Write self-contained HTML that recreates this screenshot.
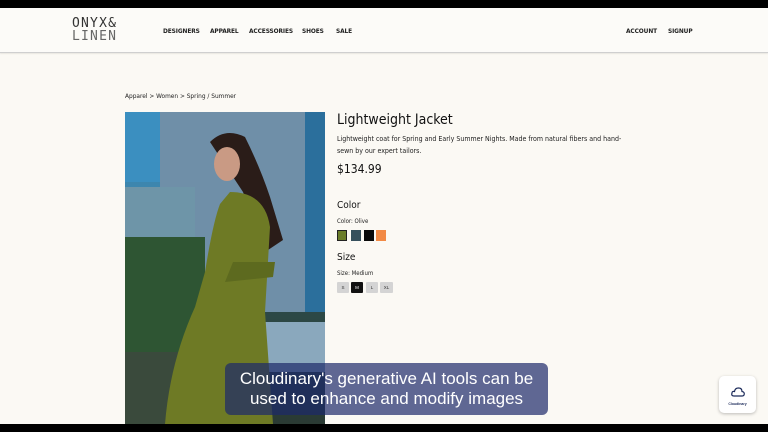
<!DOCTYPE html>
<html><head><meta charset="utf-8"><style>
*{margin:0;padding:0;box-sizing:border-box}
body{width:768px;height:432px;overflow:hidden;background:#fbf9f4;font-family:"Liberation Sans",sans-serif;color:#222;position:relative}
.topbar{position:absolute;left:0;top:0;width:768px;height:8px;background:#000}
.botbar{position:absolute;left:0;top:424px;width:768px;height:8px;background:#000}
.header{position:absolute;left:0;top:8px;width:768px;height:45px;background:#fcfbf8;border-bottom:1px solid #cfcfcf;box-shadow:0 1px 1px rgba(0,0,0,.08)}
.logo{position:absolute;left:72px;top:9px;font-size:13px;line-height:13px;letter-spacing:1.2px;color:#333;font-family:"DejaVu Sans Mono",monospace}
.logo div:last-child{color:#666}
.nav{position:absolute;top:19px;font-size:6.5px;color:#222;font-family:"DejaVu Sans Condensed","DejaVu Sans",sans-serif;font-weight:bold;letter-spacing:-.1px}
.crumb{position:absolute;left:125px;top:92px;font-size:6.5px;color:#222;font-family:"DejaVu Sans Condensed",sans-serif}
.img{position:absolute;left:125px;top:112px;width:200px;height:312px;overflow:hidden}
h1{position:absolute;left:337px;top:112px;font-size:14px;font-weight:normal;color:#111;font-family:"DejaVu Sans Condensed",sans-serif}
.desc{position:absolute;left:337px;top:133px;width:320px;font-size:7px;line-height:12px;color:#222;font-family:"DejaVu Sans Condensed",sans-serif}
.price{position:absolute;left:337px;top:162px;font-size:12px;color:#111;font-family:"DejaVu Sans Condensed",sans-serif}
.h2{position:absolute;left:337px;font-size:10px;color:#111;font-family:"DejaVu Sans Condensed",sans-serif}
.lbl{position:absolute;left:337px;font-size:6px;color:#222;font-family:"DejaVu Sans Condensed",sans-serif}
.sw{position:absolute;top:230px;width:10px;height:11px}
.sz{position:absolute;top:282px;width:12px;height:11px;background:#d4d4d4;font-size:4.5px;text-align:center;line-height:11px;color:#333;border-radius:1px}
.cap{position:absolute;left:225px;top:363px;width:323px;height:52px;background:rgba(28,42,105,.7);border-radius:6px;color:#fff;font-size:17px;line-height:20px;text-align:center;padding-top:6px}
.cld{position:absolute;left:719px;top:376px;width:37px;height:37px;background:#fff;border-radius:5px;box-shadow:0 1px 3px rgba(0,0,0,.25);text-align:center}
</style></head><body>
<div class="topbar"></div>
<div class="header">
 <div class="logo"><div>ONYX&amp;</div><div>LINEN</div></div>
 <div class="nav" style="left:163px">DESIGNERS</div>
 <div class="nav" style="left:210px">APPAREL</div>
 <div class="nav" style="left:249px">ACCESSORIES</div>
 <div class="nav" style="left:302px">SHOES</div>
 <div class="nav" style="left:336px">SALE</div>
 <div class="nav" style="left:626px">ACCOUNT</div>
 <div class="nav" style="left:668px">SIGNUP</div>
</div>
<div class="crumb">Apparel &gt; Women &gt; Spring / Summer</div>
<div class="img"><svg width="200" height="312" viewBox="0 0 200 312">
<defs><linearGradient id="bg" x1="0" y1="0" x2="0" y2="1"><stop offset="0" stop-color="#2f86b5"/><stop offset=".45" stop-color="#4a86a8"/><stop offset=".6" stop-color="#2c4a48"/><stop offset="1" stop-color="#2a3a33"/></linearGradient></defs>
<rect width="200" height="312" fill="url(#bg)"/>
<rect x="35" y="0" width="145" height="200" fill="#6f8fa8"/>
<rect x="180" y="0" width="20" height="200" fill="#2b6f9c"/>
<rect x="0" y="0" width="35" height="70" fill="#3b8fc0"/>
<rect x="0" y="75" width="70" height="50" fill="#6e95a8"/>
<rect x="0" y="125" width="80" height="120" fill="#2e5533"/>
<rect x="105" y="210" width="95" height="50" fill="#8aa8bd"/>
<rect x="0" y="240" width="90" height="72" fill="#3a4a3c"/>
<path d="M85 30 Q100 15 120 25 Q135 55 145 85 L158 128 L140 140 L118 80 Z" fill="#2a1c18"/>
<ellipse cx="102" cy="52" rx="13" ry="17" fill="#c99a84"/>
<path d="M105 80 Q140 80 145 115 L140 200 L148 312 L40 312 Q45 250 70 195 L80 160 Q88 110 95 92 Z" fill="#6e7a25"/>
<path d="M108 150 L150 150 L148 165 L100 170 Z" fill="#5d6a1f"/>
</svg></div>
<h1>Lightweight Jacket</h1>
<div class="desc">Lightweight coat for Spring and Early Summer Nights. Made from natural fibers and hand-<br>sewn by our expert tailors.</div>
<div class="price">$134.99</div>
<div class="h2" style="top:200px">Color</div>
<div class="lbl" style="top:218px">Color: Olive</div>
<div class="sw" style="left:337px;background:#6b7d2a;border:1px solid #222"></div>
<div class="sw" style="left:351px;background:#36505c"></div>
<div class="sw" style="left:364px;background:#0a0a0a"></div>
<div class="sw" style="left:376px;background:#f28a45"></div>
<div class="h2" style="top:252px">Size</div>
<div class="lbl" style="top:270px">Size: Medium</div>
<div class="sz" style="left:337px">S</div>
<div class="sz" style="left:351px;background:#111;color:#fff">M</div>
<div class="sz" style="left:366px">L</div>
<div class="sz" style="left:380px;width:13px">XL</div>
<div class="cap">Cloudinary's generative AI tools can be<br>used to enhance and modify images</div>
<div class="cld"><svg width="14" height="10" viewBox="0 0 14 10" style="margin-top:11px"><path d="M3 9 Q0 9 1 6 Q1 4 3.5 4.5 Q4 1 7.5 1 Q11 1 11 4.5 Q14 5 13 8 Q12.5 9 11 9 Z" fill="none" stroke="#1b2a5a" stroke-width="1.2"/></svg><div style="font-size:3.5px;color:#1b2a5a;font-weight:bold">Cloudinary</div></div>
<div class="botbar"></div>
</body></html>
